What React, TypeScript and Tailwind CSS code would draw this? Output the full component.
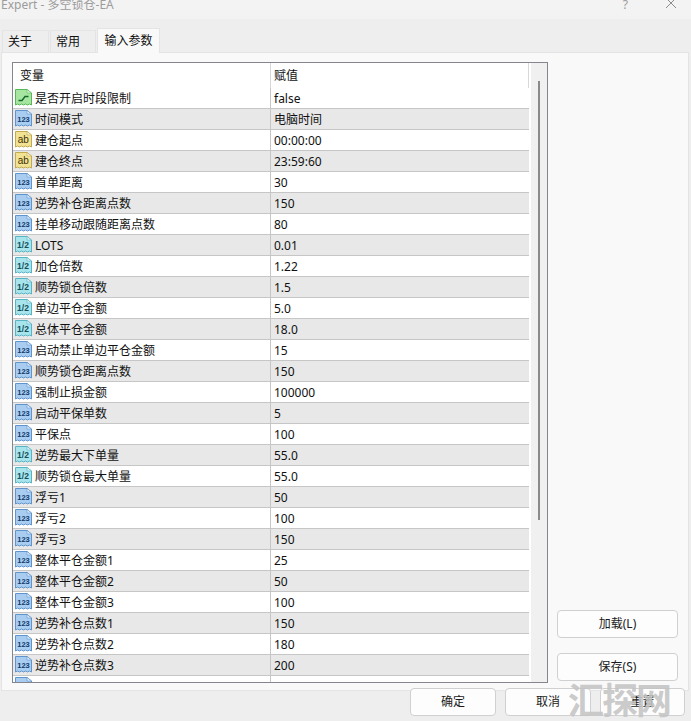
import React from 'react'

type Kind = 'bool' | 'int' | 'str' | 'dbl'

const rows: { name: string; value: string; kind: Kind }[] = [
  { name: '是否开启时段限制', value: 'false', kind: 'bool' },
  { name: '时间模式', value: '电脑时间', kind: 'int' },
  { name: '建仓起点', value: '00:00:00', kind: 'str' },
  { name: '建仓终点', value: '23:59:60', kind: 'str' },
  { name: '首单距离', value: '30', kind: 'int' },
  { name: '逆势补仓距离点数', value: '150', kind: 'int' },
  { name: '挂单移动跟随距离点数', value: '80', kind: 'int' },
  { name: 'LOTS', value: '0.01', kind: 'dbl' },
  { name: '加仓倍数', value: '1.22', kind: 'dbl' },
  { name: '顺势锁仓倍数', value: '1.5', kind: 'dbl' },
  { name: '单边平仓金额', value: '5.0', kind: 'dbl' },
  { name: '总体平仓金额', value: '18.0', kind: 'dbl' },
  { name: '启动禁止单边平仓金额', value: '15', kind: 'int' },
  { name: '顺势锁仓距离点数', value: '150', kind: 'int' },
  { name: '强制止损金额', value: '100000', kind: 'int' },
  { name: '启动平保单数', value: '5', kind: 'int' },
  { name: '平保点', value: '100', kind: 'int' },
  { name: '逆势最大下单量', value: '55.0', kind: 'dbl' },
  { name: '顺势锁仓最大单量', value: '55.0', kind: 'dbl' },
  { name: '浮亏1', value: '50', kind: 'int' },
  { name: '浮亏2', value: '100', kind: 'int' },
  { name: '浮亏3', value: '150', kind: 'int' },
  { name: '整体平仓金额1', value: '25', kind: 'int' },
  { name: '整体平仓金额2', value: '50', kind: 'int' },
  { name: '整体平仓金额3', value: '100', kind: 'int' },
  { name: '逆势补仓点数1', value: '150', kind: 'int' },
  { name: '逆势补仓点数2', value: '180', kind: 'int' },
  { name: '逆势补仓点数3', value: '200', kind: 'int' },
  { name: '', value: '', kind: 'int' },
]

const iconColors: Record<Kind, { fill: string; stroke: string; fold: string }> = {
  bool: { fill: '#a6e6a0', stroke: '#58b858', fold: '#e2f8de' },
  int: { fill: '#a9cdf0', stroke: '#5f95cc', fold: '#e2effb' },
  str: { fill: '#f2e394', stroke: '#c2aa4e', fold: '#fbf5d4' },
  dbl: { fill: '#a8e4ec', stroke: '#58b4c4', fold: '#e2f7fa' },
}

function TypeIcon({ kind }: { kind: Kind }) {
  const c = iconColors[kind]
  return (
    <svg width="17" height="17" viewBox="0 0 17 17" className="mt-[1px] shrink-0">
      <path
        d="M0.5 0.5H12L16.5 4V16L14.5 15L12.5 16L10.5 15L8.5 16L6.5 15L4.5 16L2.5 15L0.5 16Z"
        fill={c.fill}
        stroke={c.stroke}
      />
      <path d="M12 0.5V4H16.5Z" fill={c.fold} stroke={c.stroke} strokeWidth="0.6" />
      {kind === 'bool' && (
        <path d="M3.5 11.5H7L10 7.5H13.5" fill="none" stroke="#14692a" strokeWidth="1.4" />
      )}
      {kind === 'int' && (
        <text x="8.5" y="11.6" textAnchor="middle" fontSize="7.5" fontWeight="700" fill="#123a6c" fontFamily="'Liberation Sans', sans-serif">
          123
        </text>
      )}
      {kind === 'str' && (
        <text x="8.3" y="12" textAnchor="middle" fontSize="10" fill="#3c3006" fontFamily="'Liberation Sans', sans-serif">
          ab
        </text>
      )}
      {kind === 'dbl' && (
        <text x="8" y="11.8" textAnchor="middle" fontSize="8.5" fontWeight="700" fill="#14505c" fontFamily="'Liberation Sans', sans-serif">
          1/2
        </text>
      )}
    </svg>
  )
}

function DlgButton({ label, className = '' }: { label: string; className?: string }) {
  return (
    <button className={`h-[28px] rounded-[4px] border border-[#d0d0d0] bg-[#fdfdfd] text-[12px] text-[#1a1a1a] ${className}`}>
      {label}
    </button>
  )
}

export default function App() {
  return (
    <div className="relative flex h-[721px] w-[691px] flex-col overflow-hidden bg-[#eeeeee] font-['Noto_Sans','Noto_Sans_CJK_SC',sans-serif] text-[12px] text-[#111111]">
      {/* Title bar */}
      <div className="flex h-[19px] shrink-0 items-end justify-between overflow-hidden bg-[#f3f3f3] pb-[4px] pl-[1px] pr-[15px] leading-[20px] text-[#9c9c9c]">
        <span>Expert - 多空锁仓-EA</span>
        <div className="flex items-center gap-[38px]">
          <span>?</span>
          <svg width="10" height="10" viewBox="0 0 10 10" className="mb-[5px]">
            <path d="M0 0L10 10M10 0L0 10" stroke="#8c8c8c" fill="none" />
          </svg>
        </div>
      </div>

      {/* Tabs */}
      <div className="flex h-[33px] shrink-0 items-end gap-[1px] pl-[2px]">
        <div className="flex h-[22px] w-[47px] items-center border border-b-0 border-[#e4e4e4] pl-[5px]">关于</div>
        <div className="flex h-[22px] w-[46px] items-center border border-b-0 border-[#e4e4e4] pl-[5px]">常用</div>
        <div className="z-10 -mb-[1px] flex h-[25px] w-[63px] items-center justify-center border border-b-0 border-[#e4e4e4] bg-[#f9f9f9]">输入参数</div>
      </div>

      {/* Panel */}
      <div className="ml-[1px] flex h-[639px] w-[688px] shrink-0 gap-[9px] border border-[#e4e4e4] bg-[#f9f9f9] pb-[8px] pl-[10px] pt-[9px]">
        {/* Parameter table */}
        <div className="flex h-[621px] w-[536px] shrink-0 overflow-hidden border border-[#85858d] bg-white">
          <div className="w-[516px] shrink-0 overflow-hidden">
            <div className="flex h-[25px] items-center bg-white">
              <div className="h-full w-[258px] shrink-0 border-r border-[#d8d8d8] pl-[7px] leading-[25px]">变量</div>
              <div className="h-full flex-1 border-r border-[#d8d8d8] pl-[3px] leading-[25px]">赋值</div>
            </div>
            {rows.map((row, i) => (
              <div
                key={i}
                className={`flex h-[21px] border-b border-[#c6c6c6] pl-[2px] leading-[22px] ${i % 2 === 1 ? 'bg-[#e8e8e8]' : 'bg-white'}`}
              >
                <div className="flex h-full w-[256px] shrink-0 gap-[3px] border-r border-[#c6c6c6]">
                  <TypeIcon kind={row.kind} />
                  <span className="whitespace-nowrap">{row.name}</span>
                </div>
                <span className="pl-[3px]">{row.value}</span>
              </div>
            ))}
          </div>
          {/* Scrollbar */}
          <div className="ml-[2px] flex w-[16px] shrink-0 justify-center bg-[#f0f0f0] pt-[18px]">
            <div className="h-[439px] w-[2px] bg-[#8a8a8a]" />
          </div>
        </div>

        {/* Side buttons */}
        <div className="flex w-[121px] shrink-0 flex-col justify-end gap-[15px] pb-[1px]">
          <DlgButton label="加载(L)" className="w-full" />
          <DlgButton label="保存(S)" className="w-full" />
        </div>
      </div>

      {/* Footer buttons */}
      <div className="relative z-10 -mt-[3px] flex justify-end gap-[9px] pr-[6px]">
        <DlgButton label="确定" className="w-[86px]" />
        <DlgButton label="取消" className="w-[86px]" />
        <DlgButton label="重置" className="w-[85px]" />
      </div>

      {/* Watermark */}
      <div className="absolute -bottom-[1px] right-[21px] z-20 text-[36px] font-bold leading-[42px] tracking-[-2px] text-[#c4c4c4]/90">
        汇探网
      </div>
    </div>
  )
}
